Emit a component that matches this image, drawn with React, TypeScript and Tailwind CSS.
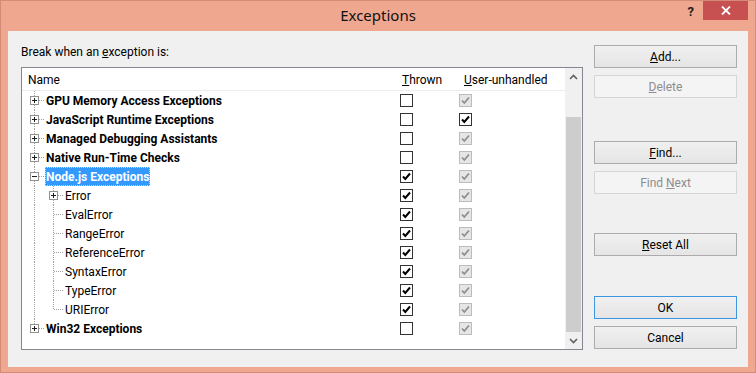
import React from 'react';

type Row = {
  label: string;
  level: 0 | 1;
  exp?: 'plus' | 'minus';
  thrown: boolean;
  un: 'dis' | 'on';
  selected?: boolean;
  last?: boolean;
};

const rows: Row[] = [
  { label: 'GPU Memory Access Exceptions', level: 0, exp: 'plus', thrown: false, un: 'dis' },
  { label: 'JavaScript Runtime Exceptions', level: 0, exp: 'plus', thrown: false, un: 'on' },
  { label: 'Managed Debugging Assistants', level: 0, exp: 'plus', thrown: false, un: 'dis' },
  { label: 'Native Run-Time Checks', level: 0, exp: 'plus', thrown: false, un: 'dis' },
  { label: 'Node.js Exceptions', level: 0, exp: 'minus', thrown: true, un: 'dis', selected: true },
  { label: 'Error', level: 1, exp: 'plus', thrown: true, un: 'dis' },
  { label: 'EvalError', level: 1, thrown: true, un: 'dis' },
  { label: 'RangeError', level: 1, thrown: true, un: 'dis' },
  { label: 'ReferenceError', level: 1, thrown: true, un: 'dis' },
  { label: 'SyntaxError', level: 1, thrown: true, un: 'dis' },
  { label: 'TypeError', level: 1, thrown: true, un: 'dis' },
  { label: 'URIError', level: 1, thrown: true, un: 'dis', last: true },
  { label: 'Win32 Exceptions', level: 0, exp: 'plus', thrown: false, un: 'dis', last: true },
];

const DOT = '#a0a0a0';

function ExpBox({ x, kind }: { x: number; kind: 'plus' | 'minus' }) {
  return (
    <g>
      <rect x={x + 0.5} y={5.5} width={8} height={8} fill="#fff" stroke="#919191" />
      <rect x={x + 2} y={9} width={5} height={1} fill="#1f1f1f" />
      {kind === 'plus' && <rect x={x + 4} y={7} width={1} height={5} fill="#1f1f1f" />}
    </g>
  );
}

function Gutter({ row }: { row: Row }) {
  if (row.level === 0) {
    return (
      <svg width={23} height={19} className="shrink-0">
        <line x1={12.5} y1={0} x2={12.5} y2={5} stroke={DOT} strokeDasharray="1 1" />
        {!row.last && <line x1={12.5} y1={14} x2={12.5} y2={19} stroke={DOT} strokeDasharray="1 1" />}
        <line x1={17} y1={9.5} x2={23} y2={9.5} stroke={DOT} strokeDasharray="1 1" />
        <ExpBox x={8} kind={row.exp!} />
      </svg>
    );
  }
  return (
    <svg width={42} height={19} className="shrink-0">
      <line x1={12.5} y1={0} x2={12.5} y2={19} stroke={DOT} strokeDasharray="1 1" />
      {row.exp ? (
        <>
          <line x1={31.5} y1={0} x2={31.5} y2={5} stroke={DOT} strokeDasharray="1 1" />
          <line x1={31.5} y1={14} x2={31.5} y2={19} stroke={DOT} strokeDasharray="1 1" />
          <line x1={36} y1={9.5} x2={42} y2={9.5} stroke={DOT} strokeDasharray="1 1" />
          <ExpBox x={27} kind={row.exp} />
        </>
      ) : (
        <>
          <line x1={31.5} y1={0} x2={31.5} y2={row.last ? 10 : 19} stroke={DOT} strokeDasharray="1 1" />
          <line x1={32} y1={9.5} x2={42} y2={9.5} stroke={DOT} strokeDasharray="1 1" />
        </>
      )}
    </svg>
  );
}

function Check({ state }: { state: 'off' | 'on' | 'dis' }) {
  if (state === 'dis') {
    return (
      <div className="w-[13px] h-[13px] border border-[#bcbcbc] bg-[#e6e6e6] flex items-center justify-center">
        <svg width={11} height={11} viewBox="0 0 11 11">
          <path d="M2 5.5 L4.3 8 L9 2.5" fill="none" stroke="#8e8e8e" strokeWidth={1.8} />
        </svg>
      </div>
    );
  }
  return (
    <div className="w-[13px] h-[13px] border border-[#333333] bg-white flex items-center justify-center">
      {state === 'on' && (
        <svg width={11} height={11} viewBox="0 0 11 11">
          <path d="M2 5.5 L4.3 8 L9 2.5" fill="none" stroke="#000" strokeWidth={2} />
        </svg>
      )}
    </div>
  );
}

function TreeRow({ row }: { row: Row }) {
  return (
    <div className="flex h-[19px] items-center">
      <div className="w-[378px] flex items-center h-full">
        <Gutter row={row} />
        <span
          className={
            'h-full pt-[1px] leading-[16px] border ' +
            (row.level === 0 ? 'font-bold ' : '') +
            (row.selected
              ? 'bg-[#3399ff] text-white border-dotted border-[#e9d9a0]'
              : 'text-black border-transparent')
          }
        >
          {row.label}
        </span>
      </div>
      <div className="w-[59px]">
        <Check state={row.thrown ? 'on' : 'off'} />
      </div>
      <div>
        <Check state={row.un === 'on' ? 'on' : 'dis'} />
      </div>
    </div>
  );
}

function Btn({
  children,
  mt,
  disabled,
  def,
}: {
  children: React.ReactNode;
  mt: string;
  disabled?: boolean;
  def?: boolean;
}) {
  const base = 'w-[143px] h-[23px] flex items-center justify-center text-[12px] border ';
  const look = disabled
    ? 'bg-[#f4f4f4] border-[#d5d5d5] text-[#8d8d8d]'
    : def
      ? 'bg-gradient-to-b from-[#f0f0f0] to-[#e5e5e5] border-[#3c96e0] text-black'
      : 'bg-gradient-to-b from-[#f0f0f0] to-[#e5e5e5] border-[#acacac] text-black';
  return <div className={base + look + ' ' + mt}>{children}</div>;
}

export default function App() {
  return (
    <div className="w-[756px] h-[373px] bg-[#efa78f] shadow-[inset_0_0_0_1px_#d38c76] flex flex-col font-['Roboto',sans-serif] select-none">
      {/* title bar */}
      <div className="h-[31px] grid grid-cols-[1fr_auto_1fr] shrink-0">
        <div />
        <div className="pt-[5px] text-[15px] leading-[20px] text-[#111] font-['Noto_Sans',sans-serif]">Exceptions</div>
        <div className="flex justify-end items-start pr-[8px] pt-[1px]">
          <div className="mr-[9px] mt-[3px] text-[13px] font-bold leading-[16px] text-[#222]">?</div>
          <div className="w-[45px] h-[19px] bg-[#c75050] flex items-center justify-center">
            <svg width={10} height={9} viewBox="0 0 10 9">
              <path d="M1 0.5 L9 8.5 M9 0.5 L1 8.5" stroke="#fff" strokeWidth={1.8} />
            </svg>
          </div>
        </div>
      </div>
      {/* client */}
      <div className="flex-1 mx-[8px] mb-[6px] bg-[#f0f0f0] flex text-[12px] text-black">
        <div className="pl-[13px] flex flex-col">
          <div className="mt-[12px] h-[16px] leading-[16px] mb-[8px] pt-[1px]">
            Break when an <span className="underline">e</span>xception is:
          </div>
          <div className="w-[562px] h-[283px] border border-[#828790] bg-white flex">
            <div className="flex-1 flex flex-col overflow-hidden">
              <div className="h-[23px] shrink-0 flex items-center border-b border-[#ececec] pt-[1px]">
                <div className="w-[378px] pl-[6px]">Name</div>
                <div className="w-[59px] pl-[2px]">
                  <span className="underline">T</span>hrown
                </div>
                <div className="pl-[5px]">
                  <span className="underline">U</span>ser-unhandled
                </div>
              </div>
              {rows.map((r) => (
                <TreeRow key={r.label} row={r} />
              ))}
            </div>
            <div className="w-[17px] bg-[#f0f0f0] flex flex-col items-center">
              <div className="h-[17px] w-full flex items-center justify-center">
                <svg width={9} height={6} viewBox="0 0 9 6">
                  <path d="M1 5 L4.5 1.5 L8 5" fill="none" stroke="#606060" strokeWidth={1.6} />
                </svg>
              </div>
              <div className="h-[32px]" />
              <div className="w-[15px] flex-1 bg-[#cdcdcd]" />
              <div className="h-[17px] w-full flex items-center justify-center">
                <svg width={9} height={6} viewBox="0 0 9 6">
                  <path d="M1 1 L4.5 4.5 L8 1" fill="none" stroke="#606060" strokeWidth={1.6} />
                </svg>
              </div>
            </div>
          </div>
        </div>
        <div className="ml-[11px] flex flex-col">
          <Btn mt="mt-[14px]">
            <span>
              <span className="underline">A</span>dd...
            </span>
          </Btn>
          <Btn mt="mt-[7px]" disabled>
            <span>
              <span className="underline">D</span>elete
            </span>
          </Btn>
          <Btn mt="mt-[43px]">
            <span>
              <span className="underline">F</span>ind...
            </span>
          </Btn>
          <Btn mt="mt-[7px]" disabled>
            <span>
              Find <span className="underline">N</span>ext
            </span>
          </Btn>
          <Btn mt="mt-[39px]">
            <span>
              <span className="underline">R</span>eset All
            </span>
          </Btn>
          <Btn mt="mt-[40px]" def>
            OK
          </Btn>
          <Btn mt="mt-[7px]">Cancel</Btn>
        </div>
      </div>
    </div>
  );
}
